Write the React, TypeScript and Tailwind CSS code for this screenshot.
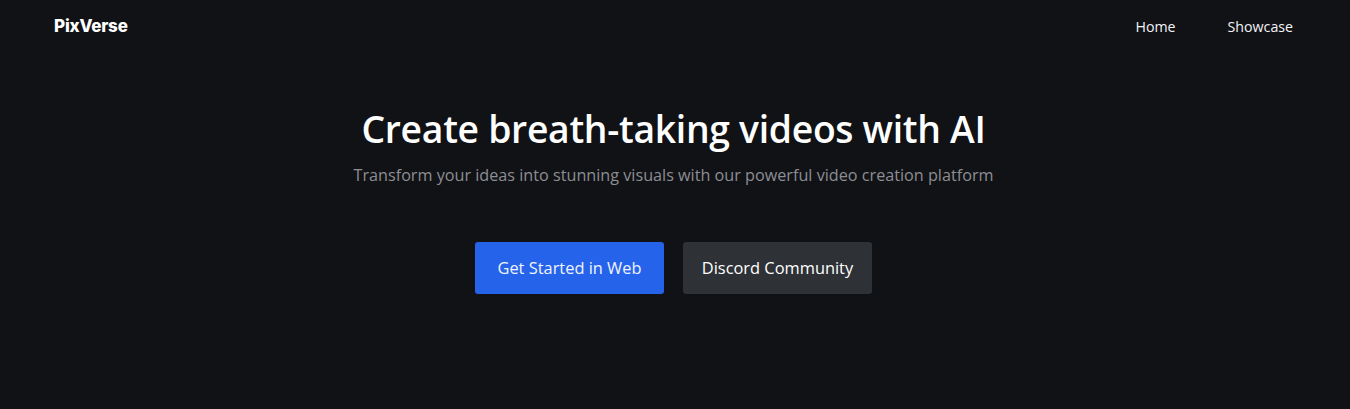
export default function App() {
  return (
    <div className="min-h-[409px] w-full bg-[#111216] text-white font-['Open_Sans',sans-serif]">
      {/* Header */}
      <header className="flex items-center justify-between h-[53px] pl-[54px] pr-[57px]">
        <span className="font-['Inter',sans-serif] font-extrabold text-[17px] tracking-[-0.2px]">PixVerse</span>
        <nav className="flex items-center gap-[52px] text-[14.2px] text-[#f3f4f6]">
          <a>Home</a>
          <a>Showcase</a>
        </nav>
      </header>

      {/* Hero */}
      <section className="flex flex-col items-center pt-[50px] pr-[3px]">
        <h1 className="text-[37.3px] leading-[52px] font-semibold tracking-[-0.3px]">Create breath-taking videos with AI</h1>
        <p className="mt-[8px] text-[16.2px] leading-[24px] text-[#8c8e93]">
          Transform your ideas into stunning visuals with our powerful video creation platform
        </p>
        <div className="flex gap-[19px] mt-[55px]">
          <button className="w-[189px] h-[52px] rounded-[3px] bg-[#2563eb] text-[16.4px] text-[#f0f4ff]">Get Started in Web</button>
          <button className="w-[189px] h-[52px] rounded-[3px] bg-[#2e3136] text-[16.4px] text-white">Discord Community</button>
        </div>
      </section>
    </div>
  );
}
